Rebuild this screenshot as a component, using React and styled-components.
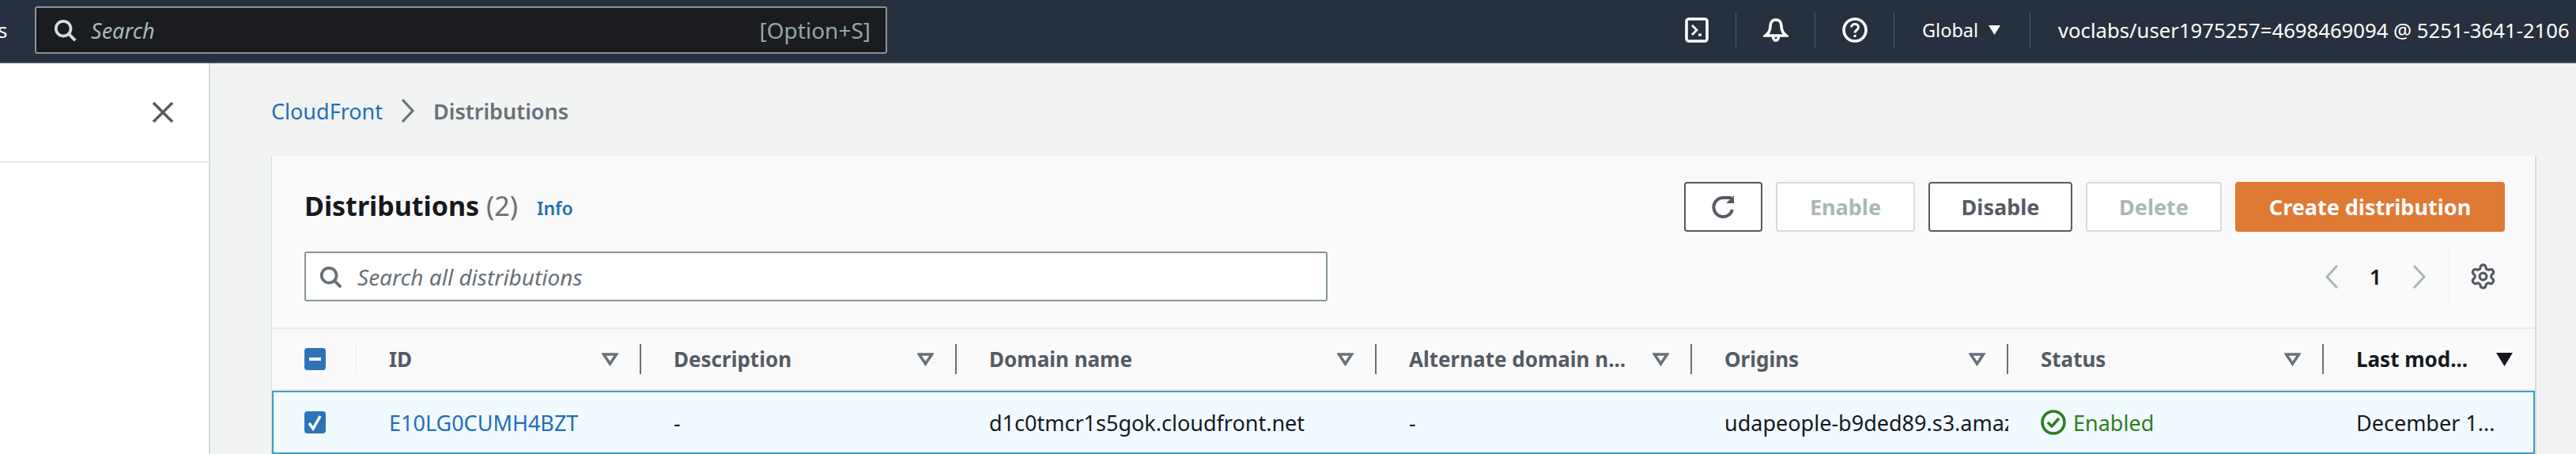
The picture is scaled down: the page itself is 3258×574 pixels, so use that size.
import styled, { createGlobalStyle } from "styled-components";
import { Settings } from "lucide-react";

const GlobalStyle = createGlobalStyle`
  html, body {
    margin: 0;
    height: 574px;
    overflow: hidden;
    background: #f2f3f3;
    font-family: "Noto Sans", "Liberation Sans", sans-serif;
    color: #16191f;
  }
  * { box-sizing: border-box; }
`;

const COLUMNS = [
  { label: "ID", width: 360 },
  { label: "Description", width: 399 },
  { label: "Domain name", width: 531 },
  { label: "Alternate domain n...", width: 399 },
  { label: "Origins", width: 400 },
  { label: "Status", width: 399 },
  { label: "Last mod...", width: 268, sorted: true },
];

const GRID = `107px ${COLUMNS.map((c) => c.width + "px").join(" ")}`;

function SearchIcon({ color, size }) {
  return (
    <svg width={size} height={size} viewBox="0 0 16 16" fill="none" stroke={color} strokeWidth="2">
      <circle cx="7" cy="7" r="5" />
      <path d="M10.5 10.5 15 15" />
    </svg>
  );
}

function Caret() {
  return (
    <svg width="17" height="14" viewBox="0 0 17 14">
      <path d="M1 1h15L8.5 13z" fill="#fff" />
    </svg>
  );
}

function SortIcon({ sorted }) {
  return (
    <svg width="21" height="17" viewBox="0 0 21 17">
      {sorted ? (
        <path d="M0 0h21L10.500 17z" fill="#16191f" />
      ) : (
        <path d="M2.500 2h16L10.500 14z" fill="none" stroke="#687078" strokeWidth="3.500" />
      )}
    </svg>
  );
}

function Chevron({ dir, color, width, height }) {
  return (
    <svg width={width} height={height} viewBox="0 0 18 30" fill="none" stroke={color} strokeWidth="3">
      <path d={dir === "left" ? "M16 1 3 15l13 14" : "M2 1l13 14L2 29"} />
    </svg>
  );
}

export default function App() {
  return (
    <Page>
      <GlobalStyle />
      <Nav>
        <NavClip>s</NavClip>
        <NavSearch>
          <SearchIcon color="#d5dbdb" size={30} />
          <NavPlaceholder>Search</NavPlaceholder>
          <NavShortcut>[Option+S]</NavShortcut>
        </NavSearch>
        <NavRight>
          <NavIconCell>
            <svg width="32" height="32" viewBox="0 0 16 16" fill="none" stroke="#fff" strokeWidth="1.800">
              <rect x="1.500" y="1" width="13" height="14" rx="1.500" />
              <path d="M5 5l3 3-3 3M9 11h2" strokeWidth="1.400" />
            </svg>
          </NavIconCell>
          <NavIconCell>
            <svg width="32" height="32" viewBox="0 0 16 16" fill="none" stroke="#fff" strokeWidth="1.800">
              <path d="M8 1.500c-2.500 0-3.500 2-3.500 4 0 3-1 4.500-3 6h13c-2-1.500-3-3-3-6 0-2-1-4-3.500-4z" />
              <path d="M6.300 12c0 3.500 3.400 3.500 3.400 0" />
            </svg>
          </NavIconCell>
          <NavIconCell>
            <svg width="32" height="32" viewBox="0 0 16 16" fill="none" stroke="#fff" strokeWidth="1.800">
              <circle cx="8" cy="8" r="7" />
              <path d="M5.800 6.200C5.800 3.600 10.200 3.600 10.200 6.200c0 1.800-2.200 1.800-2.200 3.600" strokeWidth="1.500" />
              <path d="M8 11v1.500" strokeWidth="1.500" />
            </svg>
          </NavIconCell>
          <RegionMenu>
            Global
            <Caret />
          </RegionMenu>
          <AccountMenu>
            voclabs/user1975257=4698469094 @ 5251-3641-2106
            <Caret />
          </AccountMenu>
        </NavRight>
      </Nav>
      <Body>
        <Sidebar>
          <SidebarHeader>
            <svg width="28" height="28" viewBox="0 0 28 28" fill="none" stroke="#545b64" strokeWidth="3.500">
              <path d="M2 2l24 24M26 2 2 26" />
            </svg>
          </SidebarHeader>
        </Sidebar>
        <Main>
          <Breadcrumbs>
            <CrumbLink>CloudFront</CrumbLink>
            <Chevron dir="right" color="#687078" width={20} height={30} />
            <CrumbCurrent>Distributions</CrumbCurrent>
          </Breadcrumbs>
          <Card>
            <CardHeader>
              <TitleRow>
                <Title>
                  Distributions <Count>(2)</Count>
                </Title>
                <InfoLink>Info</InfoLink>
                <Actions>
                  <Button $width={99}>
                    <svg width="32" height="32" viewBox="0 0 16 16" fill="none" stroke="#545b64" strokeWidth="2">
                      <path d="M13.500 9.500A6 6 0 1 1 8 2h5" />
                      <path d="M9.500 5.500h5V.5z" fill="#545b64" strokeWidth="0" />
                    </svg>
                  </Button>
                  <Button $width={176} disabled>Enable</Button>
                  <Button $width={182}>Disable</Button>
                  <Button $width={172} disabled>Delete</Button>
                  <PrimaryButton>Create distribution</PrimaryButton>
                </Actions>
              </TitleRow>
              <FilterRow>
                <FilterInput>
                  <SearchIcon color="#687078" size={30} />
                  <FilterPlaceholder>Search all distributions</FilterPlaceholder>
                </FilterInput>
                <Pagination>
                  <Chevron dir="left" color="#aab7b8" width={18} height={30} />
                  <PageNumber>1</PageNumber>
                  <Chevron dir="right" color="#aab7b8" width={18} height={30} />
                  <SettingsCell>
                    <Settings size={35} color="#545b64" strokeWidth={2.2} />
                  </SettingsCell>
                </Pagination>
              </FilterRow>
            </CardHeader>
            <HeaderRow>
              <SelectHead>
                <CheckBox>
                  <svg width="15" height="4" viewBox="0 0 15 4"><rect width="15" height="4" fill="#fff" /></svg>
                </CheckBox>
              </SelectHead>
              {COLUMNS.map((col, i) => (
                <HeadCell key={col.label} $last={i === COLUMNS.length - 1} $sorted={col.sorted}>
                  <span>{col.label}</span>
                  <SortIcon sorted={col.sorted} />
                </HeadCell>
              ))}
            </HeaderRow>
            <SelectedRow>
              <SelectCell>
                <CheckBox>
                  <svg width="21" height="22" viewBox="0 0 21 22" fill="none" stroke="#fff" strokeWidth="3.500">
                    <path d="M3 12l5 7L17 3" />
                  </svg>
                </CheckBox>
              </SelectCell>
              <BodyCell><RowLink>E10LG0CUMH4BZT</RowLink></BodyCell>
              <BodyCell>-</BodyCell>
              <BodyCell>d1c0tmcr1s5gok.cloudfront.net</BodyCell>
              <BodyCell>-</BodyCell>
              <BodyCell>udapeople-b9ded89.s3.amazonaws.com</BodyCell>
              <BodyCell>
                <StatusOk>
                  <svg width="32" height="32" viewBox="0 0 16 16" fill="none" stroke="#2f7d1e" strokeWidth="1.800">
                    <circle cx="8" cy="8" r="7" />
                    <path d="M4.500 8l2.500 2.500 4.500-5" />
                  </svg>
                  Enabled
                </StatusOk>
              </BodyCell>
              <BodyCell>December 1...</BodyCell>
            </SelectedRow>
          </Card>
        </Main>
      </Body>
    </Page>
  );
}

const Page = styled.div`
  width: 3258px;
  height: 574px;
  overflow: hidden;
`;

const Nav = styled.header`
  display: flex;
  align-items: center;
  height: 80px;
  padding-bottom: 2px;
  background: #27303f;
  border-bottom: 2px solid #414d5c;
  color: #fff;
  font-size: 24px;
`;

const NavClip = styled.div`
  width: 44px;
  margin-left: -3px;
  flex: none;
  color: #fff;
  font-size: 26px;
`;

const NavSearch = styled.div`
  display: flex;
  align-items: center;
  width: 1078px;
  height: 60px;
  margin-left: 3px;
  padding: 0 19px 0 21px;
  background: #1a1c20;
  border: 2px solid #879596;
  border-radius: 3px;
`;

const NavPlaceholder = styled.span`
  margin-left: 18px;
  color: #aab7b8;
  font-size: 27px;
  font-style: italic;
`;

const NavShortcut = styled.span`
  margin-left: auto;
  color: #95a5a6;
  font-size: 28px;
`;

const NavRight = styled.div`
  display: flex;
  align-items: center;
  margin-left: auto;
`;

const NavIconCell = styled.div`
  display: flex;
  align-items: center;
  justify-content: center;
  width: 100px;
  height: 44px;
  border-right: 1px solid #545b64;
`;

const RegionMenu = styled.div`
  display: flex;
  align-items: center;
  gap: 12px;
  width: 172px;
  height: 44px;
  padding-left: 35px;
  border-right: 1px solid #545b64;
  font-size: 23.500px;
  white-space: nowrap;
`;

const AccountMenu = styled.div`
  display: flex;
  align-items: center;
  gap: 12px;
  width: 690px;
  height: 44px;
  padding-left: 35px;
  font-size: 25.700px;
  white-space: nowrap;
`;

const Body = styled.div`
  display: flex;
  height: 494px;
`;

const Sidebar = styled.aside`
  flex: none;
  width: 266px;
  background: #fff;
  border-right: 2px solid #d5dbdb;
`;

const SidebarHeader = styled.div`
  display: flex;
  align-items: center;
  justify-content: flex-end;
  height: 126px;
  padding: 0 44px 0 0;
  border-bottom: 2px solid #eaeded;
`;

const Main = styled.main`
  flex: 1;
  min-width: 0;
  padding-left: 77px;
  padding-right: 50px;
`;

const Breadcrumbs = styled.nav`
  display: flex;
  align-items: center;
  gap: 22px;
  height: 117px;
  padding-top: 3px;
  font-size: 27px;
`;

const CrumbLink = styled.a`
  color: #1f6fb8;
`;

const CrumbCurrent = styled.span`
  color: #687078;
  font-weight: 600;
`;

const Card = styled.section`
  background: #fafafa;
  border-left: 1px solid #d5dbdb;
  border-right: 2px solid #d5dbdb;
`;

const CardHeader = styled.div`
  padding: 33px 38px 33px 41px;
  border-bottom: 2px solid #eaeded;
`;

const TitleRow = styled.div`
  display: flex;
  align-items: center;
`;

const Title = styled.h1`
  margin: -3px 0 0;
  color: #16191f;
  font-size: 34px;
  font-weight: 700;
`;

const Count = styled.span`
  color: #687078;
  font-weight: 400;
`;

const InfoLink = styled.a`
  margin: 2px 0 0 24px;
  color: #1f6fb8;
  font-size: 23px;
  font-weight: 600;
`;

const Actions = styled.div`
  display: flex;
  gap: 17px;
  margin-left: auto;
`;

const Button = styled.button`
  display: flex;
  align-items: center;
  justify-content: center;
  width: ${(p) => p.$width}px;
  height: 63px;
  padding: 0;
  background: #fff;
  border: 2px solid ${(p) => (p.disabled ? "#d5dbdb" : "#545b64")};
  border-radius: 4px;
  color: ${(p) => (p.disabled ? "#aab7b8" : "#545b64")};
  font-family: inherit;
  font-size: 27px;
  font-weight: 700;
`;

const PrimaryButton = styled(Button)`
  width: 341px;
  background: #df7a35;
  border-color: #df7a35;
  color: #fff;
`;

const FilterRow = styled.div`
  display: flex;
  align-items: center;
  justify-content: space-between;
  margin-top: 25px;
`;

const FilterInput = styled.div`
  display: flex;
  align-items: center;
  gap: 19px;
  width: 1294px;
  height: 63px;
  padding-left: 16px;
  background: #fff;
  border: 2px solid #879596;
  border-radius: 3px;
`;

const FilterPlaceholder = styled.span`
  color: #687078;
  font-size: 28px;
  font-style: italic;
`;

const Pagination = styled.div`
  display: flex;
  align-items: center;
`;

const PageNumber = styled.span`
  width: 93px;
  text-align: center;
  font-size: 27px;
  font-weight: 600;
`;

const SettingsCell = styled.div`
  display: flex;
  align-items: center;
  height: 63px;
  margin-left: 28px;
  padding-left: 25px;
  margin-right: 10px;
  border-left: 1px solid #eaeded;
`;

const HeaderRow = styled.div`
  display: grid;
  grid-template-columns: ${GRID};
  align-items: center;
  height: 78px;
  border-bottom: 2px solid #eaeded;
`;

const SelectHead = styled.div`
  display: flex;
  align-items: center;
  height: 38px;
  padding-left: 41px;
  border-right: 1px solid #eaeded;
`;

const CheckBox = styled.span`
  display: flex;
  align-items: center;
  justify-content: center;
  width: 27px;
  height: 28px;
  background: #2e73b8;
  border-radius: 4px;
`;

const HeadCell = styled.div`
  display: flex;
  align-items: center;
  justify-content: space-between;
  height: 38px;
  min-width: 0;
  padding: 0 ${(p) => (p.$last ? "29px" : "27px")} 0 41px;
  border-right: ${(p) => (p.$last ? "none" : "2px solid #687078")};
  color: ${(p) => (p.$sorted ? "#16191f" : "#545b64")};
  font-size: 26px;
  font-weight: 700;
  white-space: nowrap;
`;

const SelectedRow = styled.div`
  display: grid;
  grid-template-columns: ${GRID};
  align-items: center;
  height: 80px;
  background: #f1faff;
  box-shadow: inset 0 0 0 2px #3f9fc6;
  font-size: 27px;
`;

const SelectCell = styled.div`
  display: flex;
  padding-left: 41px;
`;

const BodyCell = styled.div`
  min-width: 0;
  padding-left: 41px;
  overflow: hidden;
  white-space: nowrap;
`;

const RowLink = styled.a`
  color: #1f6fb8;
`;

const StatusOk = styled.span`
  display: flex;
  align-items: center;
  gap: 9px;
  color: #2f7d1e;
`;
